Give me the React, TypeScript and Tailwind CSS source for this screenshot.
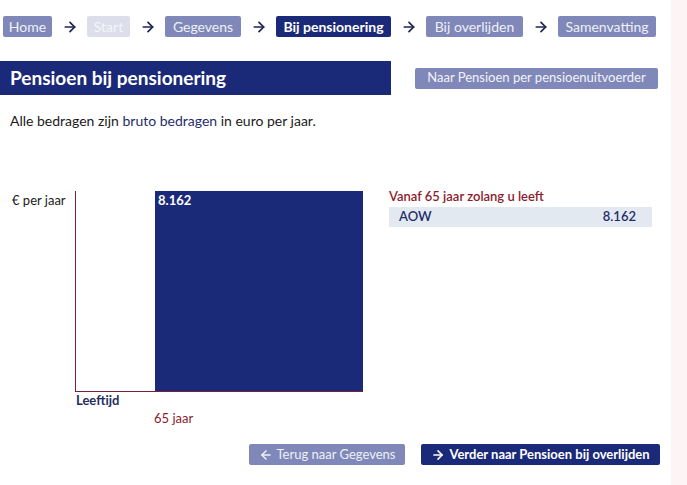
import { ArrowLeft, ArrowRight } from "lucide-react";

const steps = [
  { label: "Home", state: "done", w: "w-[49px]" },
  { label: "Start", state: "off", w: "w-[43px]" },
  { label: "Gegevens", state: "done", w: "w-[76px]" },
  { label: "Bij pensionering", state: "active", w: "w-[115px]" },
  { label: "Bij overlijden", state: "done", w: "w-[97px]" },
  { label: "Samenvatting", state: "done", w: "w-[98px]" },
] as const;

const pill = {
  done: "bg-[#7f88b9] text-[#eef0f7]",
  off: "bg-[#dcdfeb] text-[#f4f5f9]",
  active: "bg-[#1b2a78] text-white font-bold",
};

export default function App() {
  return (
    <div className="flex h-[485px] w-[687px] bg-white font-['Lato','Open_Sans',sans-serif] text-[#1a1a1a]">
      <main className="w-[671px]">
        {/* stappen */}
        <nav className="flex items-center pl-[3px] pt-[16px]">
          {steps.map((s, i) => (
            <div key={s.label} className="flex items-center">
              <span
                className={`flex h-[21px] items-center justify-center rounded-[2px] text-[14px] leading-none ${s.w} ${pill[s.state]}`}
              >
                {s.label}
              </span>
              {i < steps.length - 1 && (
                <span className="flex w-[35px] justify-center">
                  <ArrowRight className="h-[16px] w-[16px] text-[#1c2450]" strokeWidth={2.6} />
                </span>
              )}
            </div>
          ))}
        </nav>

        <div className="mt-[24px] flex items-center justify-between pr-[13px]">
          <h1 className="flex h-[34px] w-[391px] items-center bg-[#1b2a78] pl-[10px] text-[19px] font-bold text-white">
            Pensioen bij pensionering
          </h1>
          <button className="flex h-[21px] w-[243px] items-center justify-center rounded-[2px] bg-[#7f88b9] text-[13px] text-[#f2f3f8]">
            Naar Pensioen per pensioenuitvoerder
          </button>
        </div>

        <p className="mt-[15px] pl-[10px] text-[14px]">
          Alle bedragen zijn <span className="text-[#1f2d6b]">bruto bedragen</span> in euro per jaar.
        </p>

        <div className="mt-[60px] flex">
          {/* grafiek */}
          <div className="w-[389px]">
            <div className="flex">
              <div className="w-[75px] pl-[12px] text-[13px] leading-[18px]">€ per jaar</div>
              <div className="flex h-[201px] w-[288px] border-b border-l border-[#7a1f3a]">
                <div className="w-[79px]" />
                <div className="flex-1 bg-[#1b2a78] pl-[3px] text-[13px] font-bold leading-[18px] text-white">
                  8.162
                </div>
              </div>
            </div>
            <div className="pl-[76px] text-[13px] font-bold leading-[16px] text-[#1f2d5e]">Leeftijd</div>
            <div className="mt-[2px] pl-[154px] text-[13px] leading-[16px] text-[#8b1c2c]">65 jaar</div>
          </div>

          {/* tabel */}
          <div className="w-[263px]">
            <div className="mb-[6px] text-[13px] font-semibold leading-[10px] text-[#8b1c2c]">
              Vanaf 65 jaar zolang u leeft
            </div>
            <div className="flex h-[20px] items-center justify-between bg-[#e3e9f1] pl-[10px] pr-[16px] text-[13px] font-semibold text-[#1f2d6b]">
              <span>AOW</span>
              <span>8.162</span>
            </div>
          </div>
        </div>

        <div className="flex justify-end gap-[16px] pr-[11px] pt-[18px]">
          <button className="flex h-[21px] w-[156px] items-center justify-center gap-[4px] rounded-[2px] bg-[#7f88b9] text-[13px] text-[#eef0f7]">
            <ArrowLeft className="h-[14px] w-[14px]" strokeWidth={2.6} />
            Terug naar Gegevens
          </button>
          <button className="flex h-[21px] w-[239px] items-center justify-center gap-[4px] rounded-[2px] bg-[#1b2a78] text-[13px] font-bold text-white">
            <ArrowRight className="h-[14px] w-[14px]" strokeWidth={2.8} />
            Verder naar Pensioen bij overlijden
          </button>
        </div>
      </main>
      <div className="w-[16px] bg-[#fdf5f5]" />
    </div>
  );
}
